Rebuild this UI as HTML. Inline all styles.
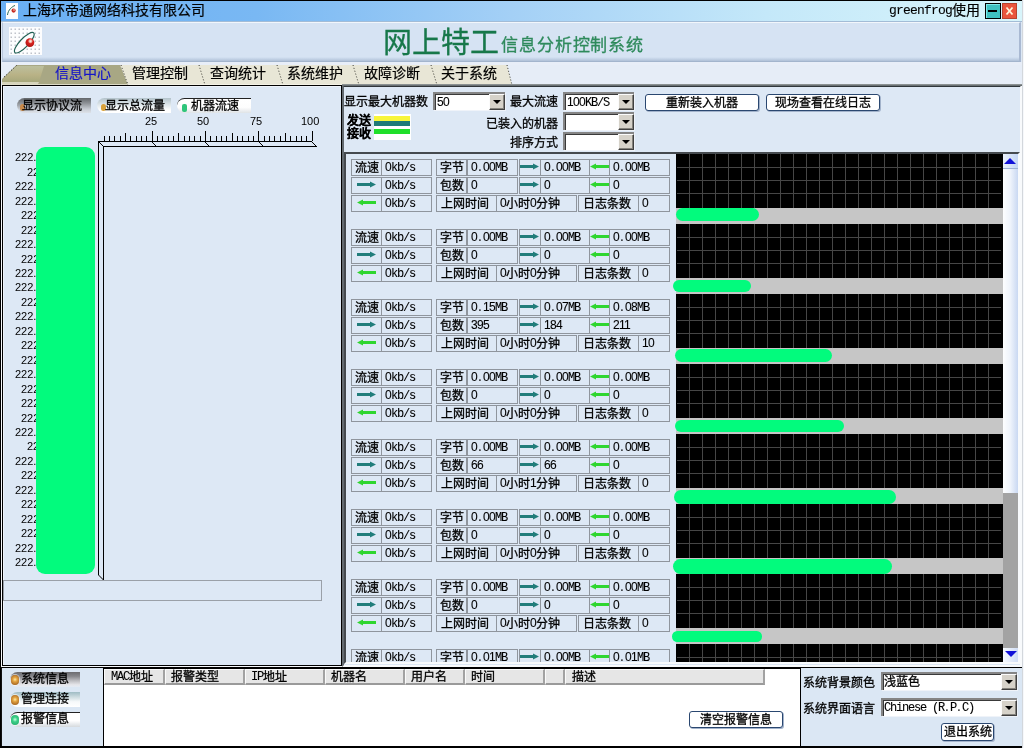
<!DOCTYPE html>
<html lang="zh-CN">
<head>
<meta charset="utf-8">
<title>网上特工信息分析控制系统</title>
<style>
*{box-sizing:border-box;margin:0;padding:0}
html,body{width:1024px;height:748px;overflow:hidden;background:#dde8f5}
#root{position:absolute;left:0;top:0;width:1024px;height:748px;overflow:hidden}
body{position:relative;font-family:"Liberation Sans",sans-serif;font-size:12px;line-height:12px;color:#000}
.a{position:absolute}
.t{position:absolute;white-space:nowrap;font-size:12px;line-height:12px;will-change:transform;-webkit-text-stroke:0.3px}
.bt{display:block;will-change:transform;-webkit-text-stroke:0.3px}
.m{font-family:"Liberation Mono",monospace;letter-spacing:-1.2px;position:relative;top:-1px;-webkit-text-stroke:0.1px}
.d{font-family:"Liberation Sans",sans-serif;letter-spacing:-0.67px;position:relative;top:-1px;-webkit-text-stroke:0.1px}
.d i{font-style:normal;display:inline-block;width:6px;text-align:center;letter-spacing:0}
.s{font-family:"Liberation Sans",sans-serif;-webkit-text-stroke:0}
/* window */
#topline{left:0;top:0;width:1022px;height:1px;background:#000}
#leftline{left:0;top:0;width:1px;height:748px;background:#000}
#botline{left:0;top:746px;width:1022px;height:2px;background:#000}
#rightedge{left:1022px;top:0;width:2px;height:748px;background:#f6f8fb;border-left:1px solid #d3d7dc}
#titlebar{left:1px;top:1px;width:1021px;height:20px;background:linear-gradient(90deg,#6aaff3 0%,#79b8f3 25%,#a4d0f6 50%,#c4e8f9 75%,#d9f5fb 100%)}
#titleline{left:1px;top:21px;width:1021px;height:1px;background:#a3bcd6}
#hdr{left:2px;top:22px;width:1019px;height:40px;background:linear-gradient(180deg,#d6e3f3 0,#d6e3f3 34px,#c3d2e6 36px,#a6b8d0 39px);border:1px solid;border-color:#f2f6fb #a9b9d2 #a3b5cd #b9c6da;border-right-width:2px}
#gap{left:1px;top:62px;width:1021px;height:3px;background:#e8eef8}
/* tabs */
#tabbar{left:1px;top:65px;width:1021px;height:20px;background:#e6edf7}
.tab{-webkit-text-stroke:0.2px;will-change:transform;position:absolute;top:-2px;height:20px;font-size:14px;line-height:20px;white-space:nowrap}
/* panels */
.cell{position:absolute;height:17px;border:1px solid #8f959d;background:#dde8f5}
.combo{position:absolute;height:18px;background:#fff;border:2px solid;border-color:#858585 transparent transparent #858585;border-right-width:0;border-bottom-width:0;box-shadow:inset 1px 1px 0 #3a3a3a,1px 1px 0 #eff3f9}
.cbtn{position:absolute;right:0;top:0;width:16px;height:16px;background:#d6d2c9;border:1px solid;border-color:#fbfbfb #404040 #404040 #fbfbfb;box-shadow:inset -1px -1px 0 #85837d}
.cbtn:after{content:"";position:absolute;left:3px;top:5px;border:4px solid transparent;border-top:4px solid #000;border-bottom:0}
.btn{position:absolute;background:#fff;border:1px solid #2a4770;border-radius:3px;box-shadow:1px 1px 0 #a3b3cb;text-align:center;font-size:12px;line-height:17px}
</style>
</head>
<body>
<div id="root">
<div class="a" id="titlebar"></div><div class="a" id="titleline"></div>
<div class="a" id="hdr"></div><div class="a" id="gap"></div>
<svg class="a" style="left:6px;top:3px" width="12" height="16" viewBox="0 0 12 16"><rect width="12" height="16" fill="#fdfdfd"/><path d="M1.5 12 C2 7 6 3.5 9 2.5" stroke="#2a6a55" stroke-width="1" fill="none"/><circle cx="7.6" cy="7.6" r="2.1" fill="#c62a22"/><circle cx="8" cy="7" r="0.8" fill="#f1d0c8"/></svg>
<div class="t" style="left:23px;top:3px;font-size:14px;line-height:14px;-webkit-text-stroke:0.2px">上海环帝通网络科技有限公司</div>
<div class="t" style="left:889px;top:3px;font-size:14px;line-height:14px;-webkit-text-stroke:0.2px"><span class="m" style="font-size:13px;letter-spacing:-0.8px">greenfrog</span>使用</div>
<div class="a" style="left:985px;top:3px;width:16px;height:16px;background:#3fc1c1;border:1px solid #000;box-shadow:inset 1px 1px 0 #7fe9e9"><div class="a" style="left:2px;top:6px;width:9px;height:2px;background:#000"></div></div>
<svg class="a" style="left:1002px;top:3px" width="15" height="16" viewBox="0 0 15 16"><rect width="15" height="16" fill="#e9553d"/><rect x="0.5" y="0.5" width="14" height="15" fill="none" stroke="#b8432f"/><path d="M4.5 4.5 L10.5 11.5 M10.5 4.5 L4.5 11.5" stroke="#fff6dc" stroke-width="1.8"/></svg>
<svg class="a" style="left:9px;top:27px" width="33" height="28" viewBox="0 0 33 28"><defs><pattern id="dots" width="4" height="4" patternUnits="userSpaceOnUse"><rect width="4" height="4" fill="#fdfdfe"/><rect x="1.5" y="1.5" width="1.5" height="1.5" fill="#c0c3cb"/></pattern><radialGradient id="ball" cx="0.56" cy="0.34" r="0.7"><stop offset="0" stop-color="#fff4ee"/><stop offset="0.22" stop-color="#f0b0a4"/><stop offset="0.4" stop-color="#d8221f"/><stop offset="1" stop-color="#a81414"/></radialGradient></defs><rect width="33" height="28" fill="url(#dots)"/><ellipse cx="15.3" cy="15.7" rx="13.6" ry="4.3" transform="rotate(-46.5 15.3 15.7)" fill="#fdfdfe" stroke="#1f5f52" stroke-width="1.15"/><circle cx="20.9" cy="15.6" r="4.4" fill="url(#ball)"/></svg>
<div class="t" style="left:383px;top:28px;font-size:29px;line-height:30px;color:#17784a">网上特工</div>
<div class="t" style="left:501px;top:37px;font-size:17px;line-height:18px;color:#2f8a5c;letter-spacing:0.9px">信息分析控制系统</div>
<div class="a" id="tabbar">
<svg class="a" style="left:0;top:0" width="1021" height="20" viewBox="0 0 1021 20"><defs><linearGradient id="tg" x1="0" y1="0" x2="0" y2="1"><stop offset="0" stop-color="#bcbf9e"/><stop offset="0.55" stop-color="#b9b286"/><stop offset="1" stop-color="#a6a77b"/></linearGradient></defs><polygon points="127,20 119,0 506,0 511,20" fill="#e8e6d6"/><rect x="127" y="19" width="384" height="1" fill="#f4f2e6"/><polygon points="1,20 1,14 15.5,0 119,0 127,20" fill="#a8a784"/><polygon points="2,17 3,13 15.5,1 43,1 38,17" fill="url(#tg)"/><polygon points="1,19 1,17 38,17 37,19" fill="#d6d4bc"/><rect x="1" y="19" width="126" height="1" fill="#dcdac6"/><path d="M15.5 0.5 L1.5 13.5" stroke="#1a1a1a" stroke-width="1" stroke-dasharray="1 2.2" fill="none"/><g stroke="#3a3a34" stroke-width="1" stroke-dasharray="1 2" fill="none"><path d="M120 0 L127 20"/><path d="M198 0 L204 20"/><path d="M276 0 L282 20"/><path d="M352 0 L358 20"/><path d="M430 0 L436 20"/><path d="M506 0 L511 20"/></g></svg>
<div class="tab" style="left:54px;color:#1515c8">信息中心</div>
<div class="tab" style="left:131px;color:#000">管理控制</div>
<div class="tab" style="left:209px;color:#000">查询统计</div>
<div class="tab" style="left:286px;color:#000">系统维护</div>
<div class="tab" style="left:363px;color:#000">故障诊断</div>
<div class="tab" style="left:439.5px;color:#000">关于系统</div>
</div>
<div class="a" style="left:1px;top:85px;width:1px;height:582px;background:#f6f8fb"></div><div class="a" style="left:1px;top:666px;width:341px;height:1px;background:#f6f8fb"></div>
<div class="a" id="lp" style="left:2px;top:85px;width:340px;height:581px;background:#dde8f5;border:1px solid #000;box-shadow:inset 1px 1px 0 #eef3fa"></div>
<div class="a" style="left:17px;top:98px;width:74px;height:15px;border-radius:8px 0 0 8px;background:linear-gradient(180deg,#63676b 0%,#8e9297 35%,#c9ced5 75%,#dde2e9 100%)"></div>
<div class="a" style="left:20px;top:104px;width:5px;height:7px;border-radius:3px;background:#c98a4a"></div>
<div class="t" style="left:22px;top:100px">显示协议流</div>
<div class="a" style="left:97px;top:98px;width:74px;height:15px;border-radius:8px 0 0 8px;background:linear-gradient(180deg,#b3c3cb 0%,#dfe7eb 45%,#ffffff 80%)"></div>
<div class="a" style="left:101px;top:104px;width:5px;height:7px;border-radius:3px;background:#d9a13a"></div>
<div class="t" style="left:105px;top:100px">显示总流量</div>
<div class="a" style="left:177px;top:98px;width:74px;height:15px;border-radius:8px 0 0 8px;border-top:1px solid #222;background:linear-gradient(180deg,#ffffff 0%,#fdfdfd 60%,#dfe3e6 100%)"></div>
<div class="a" style="left:182px;top:104px;width:5px;height:8px;border-radius:2px;background:#2ec57a"></div>
<div class="t" style="left:191px;top:100px">机器流速</div>
<div class="t s" style="left:145px;top:115px;font-size:11px;line-height:12px">25</div>
<div class="t s" style="left:197px;top:115px;font-size:11px;line-height:12px">50</div>
<div class="t s" style="left:250px;top:115px;font-size:11px;line-height:12px">75</div>
<div class="t s" style="left:301px;top:115px;font-size:11px;line-height:12px">100</div>
<svg class="a" style="left:0;top:0" width="345" height="600" viewBox="0 0 345 600" shape-rendering="crispEdges"><g stroke="#000" stroke-width="1" fill="none"><path d="M104.5 141 V136 M109.5 141 V136 M114.5 141 V136 M120.5 141 V136 M125.5 141 V133 M130.5 141 V136 M136.5 141 V136 M141.5 141 V136 M146.5 141 V136 M152.5 141 V131 M157.5 141 V136 M162.5 141 V136 M168.5 141 V136 M173.5 141 V136 M178.5 141 V133 M184.5 141 V136 M189.5 141 V136 M194.5 141 V136 M200.5 141 V136 M205.5 141 V131 M210.5 141 V136 M216.5 141 V136 M221.5 141 V136 M226.5 141 V136 M232.5 141 V133 M237.5 141 V136 M242.5 141 V136 M248.5 141 V136 M253.5 141 V136 M258.5 141 V131 M264.5 141 V136 M269.5 141 V136 M274.5 141 V136 M280.5 141 V136 M285.5 141 V133 M290.5 141 V136 M296.5 141 V136 M301.5 141 V136 M306.5 141 V136 M312.5 141 V131 "/><path d="M98 141.5 H312 M103 146.5 H317 M98.5 141 V575 M103.5 146 V580"/></g><g stroke="#000" stroke-width="1" fill="none" shape-rendering="auto"><path d="M98.5 141.5 L103.5 146.5 M151.5 141.5 L156.5 146.5 M204.5 141.5 L209.5 146.5 M258.5 141.5 L263.5 146.5 M311.5 141.5 L316.5 146.5 M98.5 575 L103.5 580"/></g></svg>
<div class="t s" style="left:15px;top:151px;font-size:11px;line-height:12px">222.</div>
<div class="t s" style="left:27px;top:166px;font-size:11px;line-height:12px">222.</div>
<div class="t s" style="left:15px;top:180px;font-size:11px;line-height:12px">222.</div>
<div class="t s" style="left:15px;top:195px;font-size:11px;line-height:12px">222.</div>
<div class="t s" style="left:21px;top:209px;font-size:11px;line-height:12px">222.</div>
<div class="t s" style="left:21px;top:224px;font-size:11px;line-height:12px">222.</div>
<div class="t s" style="left:15px;top:238px;font-size:11px;line-height:12px">222.</div>
<div class="t s" style="left:21px;top:253px;font-size:11px;line-height:12px">222.</div>
<div class="t s" style="left:15px;top:267px;font-size:11px;line-height:12px">222.</div>
<div class="t s" style="left:15px;top:281px;font-size:11px;line-height:12px">222.</div>
<div class="t s" style="left:21px;top:296px;font-size:11px;line-height:12px">222.</div>
<div class="t s" style="left:15px;top:310px;font-size:11px;line-height:12px">222.</div>
<div class="t s" style="left:15px;top:325px;font-size:11px;line-height:12px">222.</div>
<div class="t s" style="left:21px;top:339px;font-size:11px;line-height:12px">222.</div>
<div class="t s" style="left:21px;top:354px;font-size:11px;line-height:12px">222.</div>
<div class="t s" style="left:15px;top:368px;font-size:11px;line-height:12px">222.</div>
<div class="t s" style="left:21px;top:383px;font-size:11px;line-height:12px">222.</div>
<div class="t s" style="left:21px;top:397px;font-size:11px;line-height:12px">222.</div>
<div class="t s" style="left:21px;top:412px;font-size:11px;line-height:12px">222.</div>
<div class="t s" style="left:15px;top:426px;font-size:11px;line-height:12px">222.</div>
<div class="t s" style="left:27px;top:440px;font-size:11px;line-height:12px">222.</div>
<div class="t s" style="left:15px;top:455px;font-size:11px;line-height:12px">222.</div>
<div class="t s" style="left:21px;top:469px;font-size:11px;line-height:12px">222.</div>
<div class="t s" style="left:15px;top:484px;font-size:11px;line-height:12px">222.</div>
<div class="t s" style="left:21px;top:498px;font-size:11px;line-height:12px">222.</div>
<div class="t s" style="left:21px;top:513px;font-size:11px;line-height:12px">222.</div>
<div class="t s" style="left:21px;top:527px;font-size:11px;line-height:12px">222.</div>
<div class="t s" style="left:15px;top:542px;font-size:11px;line-height:12px">222.</div>
<div class="t s" style="left:15px;top:556px;font-size:11px;line-height:12px">222.</div>
<div class="a" style="left:36px;top:147px;width:59px;height:427px;border-radius:9px;background:#02fb7d"></div>
<div class="a" style="left:3px;top:580px;width:319px;height:21px;border:1px solid #9aa0a8;background:#dde8f5"></div>
<div class="a" id="rp" style="left:342px;top:84px;width:680px;height:583px;background:#dde8f5;border-left:2px solid #636a70;border-top:3px solid #30363a;border-right:2px solid #f8fafc;border-bottom:2px solid #f8fafc"><div class="a" style="left:-2px;top:-3px;width:680px;height:1px;background:#8b9192"></div><div class="a" style="left:-2px;top:-2px;width:680px;height:1px;background:#697073"></div></div>
<div class="t" style="left:344px;top:96px">显示最大机器数</div>
<div class="combo" style="left:433px;top:92px;width:72px"><div class="cbtn"></div><div class="t" style="left:2px;top:3px"><span class="d">50</span></div></div>
<div class="t" style="left:510px;top:96px">最大流速</div>
<div class="combo" style="left:563px;top:92px;width:71px"><div class="cbtn"></div><div class="t" style="left:2px;top:3px"><span class="d">100</span><span class="m">KB/S</span></div></div>
<div class="t" style="left:486px;top:118px">已装入的机器</div>
<div class="combo" style="left:563px;top:112px;width:71px"><div class="cbtn"></div></div>
<div class="t" style="left:510px;top:137px">排序方式</div>
<div class="combo" style="left:563px;top:132px;width:71px"><div class="cbtn"></div></div>
<div class="btn" style="left:645px;top:94px;width:114px;height:17px"><span class="bt">重新装入机器</span></div>
<div class="btn" style="left:766px;top:94px;width:114px;height:17px"><span class="bt">现场查看在线日志</span></div>
<div class="t" style="left:347px;top:115px;font-weight:bold;-webkit-text-stroke:0.2px">发送</div>
<div class="t" style="left:347px;top:128px;font-weight:bold;-webkit-text-stroke:0.2px">接收</div>
<div class="a" style="left:374px;top:114px;width:37px;height:26px;background:#fff"><div class="a" style="left:0;top:2px;width:36px;height:5px;background:#f8f53a"></div><div class="a" style="left:0;top:7px;width:36px;height:5px;background:#1f7a78"></div><div class="a" style="left:0;top:15px;width:36px;height:5px;background:#1fdf2a"></div></div>
<div class="a" id="sa" style="left:344px;top:152px;width:676px;height:512px;overflow:hidden;border:2px solid #454a4f;border-right:2px solid #f8fafc;border-bottom:2px solid #f8fafc;background:#dde8f5">
<div class="cell" style="left:5px;top:5px;width:31px;height:17px"><div class="t" style="left:3px;top:2px">流速</div></div>
<div class="cell" style="left:35px;top:5px;width:51px;height:17px"><div class="t" style="left:3px;top:2px"><span class="d">0</span><span class="m">kb/s</span></div></div>
<div class="cell" style="left:90px;top:5px;width:31px;height:17px"><div class="t" style="left:3px;top:2px">字节</div></div>
<div class="cell" style="left:121px;top:5px;width:51px;height:17px"><div class="t" style="left:3px;top:2px"><span class="d">0<i>.</i>00</span><span class="m">MB</span></div></div>
<div class="cell" style="left:173px;top:5px;width:22px;height:17px"></div>
<svg class="a" style="left:174px;top:9px" width="20" height="7" viewBox="0 0 20 7"><path d="M0 2 H13 V0.5 L19 3.5 L13 6.5 V5 H0 Z" fill="#217d7b"/></svg>
<div class="cell" style="left:194px;top:5px;width:50px;height:17px"><div class="t" style="left:3px;top:2px"><span class="d">0<i>.</i>00</span><span class="m">MB</span></div></div>
<div class="cell" style="left:243px;top:5px;width:21px;height:17px"></div>
<svg class="a" style="left:244px;top:9px" width="20" height="7" viewBox="0 0 20 7"><path d="M19 2 H6 V0.5 L0 3.5 L6 6.5 V5 H19 Z" fill="#2fd62f"/></svg>
<div class="cell" style="left:263px;top:5px;width:61px;height:17px"><div class="t" style="left:3px;top:2px"><span class="d">0<i>.</i>00</span><span class="m">MB</span></div></div>
<div class="cell" style="left:5px;top:23px;width:31px;height:17px"></div>
<svg class="a" style="left:11px;top:27px" width="20" height="7" viewBox="0 0 20 7"><path d="M0 2 H13 V0.5 L19 3.5 L13 6.5 V5 H0 Z" fill="#217d7b"/></svg>
<div class="cell" style="left:35px;top:23px;width:51px;height:17px"><div class="t" style="left:3px;top:2px"><span class="d">0</span><span class="m">kb/s</span></div></div>
<div class="cell" style="left:90px;top:23px;width:31px;height:17px"><div class="t" style="left:3px;top:2px">包数</div></div>
<div class="cell" style="left:121px;top:23px;width:51px;height:17px"><div class="t" style="left:3px;top:2px"><span class="d">0</span></div></div>
<div class="cell" style="left:173px;top:23px;width:22px;height:17px"></div>
<svg class="a" style="left:174px;top:27px" width="20" height="7" viewBox="0 0 20 7"><path d="M0 2 H13 V0.5 L19 3.5 L13 6.5 V5 H0 Z" fill="#217d7b"/></svg>
<div class="cell" style="left:194px;top:23px;width:50px;height:17px"><div class="t" style="left:3px;top:2px"><span class="d">0</span></div></div>
<div class="cell" style="left:243px;top:23px;width:21px;height:17px"></div>
<svg class="a" style="left:244px;top:27px" width="20" height="7" viewBox="0 0 20 7"><path d="M19 2 H6 V0.5 L0 3.5 L6 6.5 V5 H19 Z" fill="#2fd62f"/></svg>
<div class="cell" style="left:263px;top:23px;width:61px;height:17px"><div class="t" style="left:3px;top:2px"><span class="d">0</span></div></div>
<div class="cell" style="left:5px;top:41px;width:31px;height:17px"></div>
<svg class="a" style="left:11px;top:45px" width="20" height="7" viewBox="0 0 20 7"><path d="M19 2 H6 V0.5 L0 3.5 L6 6.5 V5 H19 Z" fill="#2fd62f"/></svg>
<div class="cell" style="left:35px;top:41px;width:51px;height:17px"><div class="t" style="left:3px;top:2px"><span class="d">0</span><span class="m">kb/s</span></div></div>
<div class="cell" style="left:90px;top:41px;width:61px;height:17px"><div class="t" style="left:4px;top:2px">上网时间</div></div>
<div class="cell" style="left:150px;top:41px;width:81px;height:17px"><div class="t" style="left:3px;top:2px"><span class="d">0</span>小时<span class="d">0</span>分钟</div></div>
<div class="cell" style="left:232px;top:41px;width:61px;height:17px"><div class="t" style="left:4px;top:2px">日志条数</div></div>
<div class="cell" style="left:292px;top:41px;width:32px;height:17px"><div class="t" style="left:3px;top:2px"><span class="d">0</span></div></div>
<div class="cell" style="left:5px;top:75px;width:31px;height:17px"><div class="t" style="left:3px;top:2px">流速</div></div>
<div class="cell" style="left:35px;top:75px;width:51px;height:17px"><div class="t" style="left:3px;top:2px"><span class="d">0</span><span class="m">kb/s</span></div></div>
<div class="cell" style="left:90px;top:75px;width:31px;height:17px"><div class="t" style="left:3px;top:2px">字节</div></div>
<div class="cell" style="left:121px;top:75px;width:51px;height:17px"><div class="t" style="left:3px;top:2px"><span class="d">0<i>.</i>00</span><span class="m">MB</span></div></div>
<div class="cell" style="left:173px;top:75px;width:22px;height:17px"></div>
<svg class="a" style="left:174px;top:79px" width="20" height="7" viewBox="0 0 20 7"><path d="M0 2 H13 V0.5 L19 3.5 L13 6.5 V5 H0 Z" fill="#217d7b"/></svg>
<div class="cell" style="left:194px;top:75px;width:50px;height:17px"><div class="t" style="left:3px;top:2px"><span class="d">0<i>.</i>00</span><span class="m">MB</span></div></div>
<div class="cell" style="left:243px;top:75px;width:21px;height:17px"></div>
<svg class="a" style="left:244px;top:79px" width="20" height="7" viewBox="0 0 20 7"><path d="M19 2 H6 V0.5 L0 3.5 L6 6.5 V5 H19 Z" fill="#2fd62f"/></svg>
<div class="cell" style="left:263px;top:75px;width:61px;height:17px"><div class="t" style="left:3px;top:2px"><span class="d">0<i>.</i>00</span><span class="m">MB</span></div></div>
<div class="cell" style="left:5px;top:93px;width:31px;height:17px"></div>
<svg class="a" style="left:11px;top:97px" width="20" height="7" viewBox="0 0 20 7"><path d="M0 2 H13 V0.5 L19 3.5 L13 6.5 V5 H0 Z" fill="#217d7b"/></svg>
<div class="cell" style="left:35px;top:93px;width:51px;height:17px"><div class="t" style="left:3px;top:2px"><span class="d">0</span><span class="m">kb/s</span></div></div>
<div class="cell" style="left:90px;top:93px;width:31px;height:17px"><div class="t" style="left:3px;top:2px">包数</div></div>
<div class="cell" style="left:121px;top:93px;width:51px;height:17px"><div class="t" style="left:3px;top:2px"><span class="d">0</span></div></div>
<div class="cell" style="left:173px;top:93px;width:22px;height:17px"></div>
<svg class="a" style="left:174px;top:97px" width="20" height="7" viewBox="0 0 20 7"><path d="M0 2 H13 V0.5 L19 3.5 L13 6.5 V5 H0 Z" fill="#217d7b"/></svg>
<div class="cell" style="left:194px;top:93px;width:50px;height:17px"><div class="t" style="left:3px;top:2px"><span class="d">0</span></div></div>
<div class="cell" style="left:243px;top:93px;width:21px;height:17px"></div>
<svg class="a" style="left:244px;top:97px" width="20" height="7" viewBox="0 0 20 7"><path d="M19 2 H6 V0.5 L0 3.5 L6 6.5 V5 H19 Z" fill="#2fd62f"/></svg>
<div class="cell" style="left:263px;top:93px;width:61px;height:17px"><div class="t" style="left:3px;top:2px"><span class="d">0</span></div></div>
<div class="cell" style="left:5px;top:111px;width:31px;height:17px"></div>
<svg class="a" style="left:11px;top:115px" width="20" height="7" viewBox="0 0 20 7"><path d="M19 2 H6 V0.5 L0 3.5 L6 6.5 V5 H19 Z" fill="#2fd62f"/></svg>
<div class="cell" style="left:35px;top:111px;width:51px;height:17px"><div class="t" style="left:3px;top:2px"><span class="d">0</span><span class="m">kb/s</span></div></div>
<div class="cell" style="left:90px;top:111px;width:61px;height:17px"><div class="t" style="left:4px;top:2px">上网时间</div></div>
<div class="cell" style="left:150px;top:111px;width:81px;height:17px"><div class="t" style="left:3px;top:2px"><span class="d">0</span>小时<span class="d">0</span>分钟</div></div>
<div class="cell" style="left:232px;top:111px;width:61px;height:17px"><div class="t" style="left:4px;top:2px">日志条数</div></div>
<div class="cell" style="left:292px;top:111px;width:32px;height:17px"><div class="t" style="left:3px;top:2px"><span class="d">0</span></div></div>
<div class="cell" style="left:5px;top:145px;width:31px;height:17px"><div class="t" style="left:3px;top:2px">流速</div></div>
<div class="cell" style="left:35px;top:145px;width:51px;height:17px"><div class="t" style="left:3px;top:2px"><span class="d">0</span><span class="m">kb/s</span></div></div>
<div class="cell" style="left:90px;top:145px;width:31px;height:17px"><div class="t" style="left:3px;top:2px">字节</div></div>
<div class="cell" style="left:121px;top:145px;width:51px;height:17px"><div class="t" style="left:3px;top:2px"><span class="d">0<i>.</i>15</span><span class="m">MB</span></div></div>
<div class="cell" style="left:173px;top:145px;width:22px;height:17px"></div>
<svg class="a" style="left:174px;top:149px" width="20" height="7" viewBox="0 0 20 7"><path d="M0 2 H13 V0.5 L19 3.5 L13 6.5 V5 H0 Z" fill="#217d7b"/></svg>
<div class="cell" style="left:194px;top:145px;width:50px;height:17px"><div class="t" style="left:3px;top:2px"><span class="d">0<i>.</i>07</span><span class="m">MB</span></div></div>
<div class="cell" style="left:243px;top:145px;width:21px;height:17px"></div>
<svg class="a" style="left:244px;top:149px" width="20" height="7" viewBox="0 0 20 7"><path d="M19 2 H6 V0.5 L0 3.5 L6 6.5 V5 H19 Z" fill="#2fd62f"/></svg>
<div class="cell" style="left:263px;top:145px;width:61px;height:17px"><div class="t" style="left:3px;top:2px"><span class="d">0<i>.</i>08</span><span class="m">MB</span></div></div>
<div class="cell" style="left:5px;top:163px;width:31px;height:17px"></div>
<svg class="a" style="left:11px;top:167px" width="20" height="7" viewBox="0 0 20 7"><path d="M0 2 H13 V0.5 L19 3.5 L13 6.5 V5 H0 Z" fill="#217d7b"/></svg>
<div class="cell" style="left:35px;top:163px;width:51px;height:17px"><div class="t" style="left:3px;top:2px"><span class="d">0</span><span class="m">kb/s</span></div></div>
<div class="cell" style="left:90px;top:163px;width:31px;height:17px"><div class="t" style="left:3px;top:2px">包数</div></div>
<div class="cell" style="left:121px;top:163px;width:51px;height:17px"><div class="t" style="left:3px;top:2px"><span class="d">395</span></div></div>
<div class="cell" style="left:173px;top:163px;width:22px;height:17px"></div>
<svg class="a" style="left:174px;top:167px" width="20" height="7" viewBox="0 0 20 7"><path d="M0 2 H13 V0.5 L19 3.5 L13 6.5 V5 H0 Z" fill="#217d7b"/></svg>
<div class="cell" style="left:194px;top:163px;width:50px;height:17px"><div class="t" style="left:3px;top:2px"><span class="d">184</span></div></div>
<div class="cell" style="left:243px;top:163px;width:21px;height:17px"></div>
<svg class="a" style="left:244px;top:167px" width="20" height="7" viewBox="0 0 20 7"><path d="M19 2 H6 V0.5 L0 3.5 L6 6.5 V5 H19 Z" fill="#2fd62f"/></svg>
<div class="cell" style="left:263px;top:163px;width:61px;height:17px"><div class="t" style="left:3px;top:2px"><span class="d">211</span></div></div>
<div class="cell" style="left:5px;top:181px;width:31px;height:17px"></div>
<svg class="a" style="left:11px;top:185px" width="20" height="7" viewBox="0 0 20 7"><path d="M19 2 H6 V0.5 L0 3.5 L6 6.5 V5 H19 Z" fill="#2fd62f"/></svg>
<div class="cell" style="left:35px;top:181px;width:51px;height:17px"><div class="t" style="left:3px;top:2px"><span class="d">0</span><span class="m">kb/s</span></div></div>
<div class="cell" style="left:90px;top:181px;width:61px;height:17px"><div class="t" style="left:4px;top:2px">上网时间</div></div>
<div class="cell" style="left:150px;top:181px;width:81px;height:17px"><div class="t" style="left:3px;top:2px"><span class="d">0</span>小时<span class="d">0</span>分钟</div></div>
<div class="cell" style="left:232px;top:181px;width:61px;height:17px"><div class="t" style="left:4px;top:2px">日志条数</div></div>
<div class="cell" style="left:292px;top:181px;width:32px;height:17px"><div class="t" style="left:3px;top:2px"><span class="d">10</span></div></div>
<div class="cell" style="left:5px;top:215px;width:31px;height:17px"><div class="t" style="left:3px;top:2px">流速</div></div>
<div class="cell" style="left:35px;top:215px;width:51px;height:17px"><div class="t" style="left:3px;top:2px"><span class="d">0</span><span class="m">kb/s</span></div></div>
<div class="cell" style="left:90px;top:215px;width:31px;height:17px"><div class="t" style="left:3px;top:2px">字节</div></div>
<div class="cell" style="left:121px;top:215px;width:51px;height:17px"><div class="t" style="left:3px;top:2px"><span class="d">0<i>.</i>00</span><span class="m">MB</span></div></div>
<div class="cell" style="left:173px;top:215px;width:22px;height:17px"></div>
<svg class="a" style="left:174px;top:219px" width="20" height="7" viewBox="0 0 20 7"><path d="M0 2 H13 V0.5 L19 3.5 L13 6.5 V5 H0 Z" fill="#217d7b"/></svg>
<div class="cell" style="left:194px;top:215px;width:50px;height:17px"><div class="t" style="left:3px;top:2px"><span class="d">0<i>.</i>00</span><span class="m">MB</span></div></div>
<div class="cell" style="left:243px;top:215px;width:21px;height:17px"></div>
<svg class="a" style="left:244px;top:219px" width="20" height="7" viewBox="0 0 20 7"><path d="M19 2 H6 V0.5 L0 3.5 L6 6.5 V5 H19 Z" fill="#2fd62f"/></svg>
<div class="cell" style="left:263px;top:215px;width:61px;height:17px"><div class="t" style="left:3px;top:2px"><span class="d">0<i>.</i>00</span><span class="m">MB</span></div></div>
<div class="cell" style="left:5px;top:233px;width:31px;height:17px"></div>
<svg class="a" style="left:11px;top:237px" width="20" height="7" viewBox="0 0 20 7"><path d="M0 2 H13 V0.5 L19 3.5 L13 6.5 V5 H0 Z" fill="#217d7b"/></svg>
<div class="cell" style="left:35px;top:233px;width:51px;height:17px"><div class="t" style="left:3px;top:2px"><span class="d">0</span><span class="m">kb/s</span></div></div>
<div class="cell" style="left:90px;top:233px;width:31px;height:17px"><div class="t" style="left:3px;top:2px">包数</div></div>
<div class="cell" style="left:121px;top:233px;width:51px;height:17px"><div class="t" style="left:3px;top:2px"><span class="d">0</span></div></div>
<div class="cell" style="left:173px;top:233px;width:22px;height:17px"></div>
<svg class="a" style="left:174px;top:237px" width="20" height="7" viewBox="0 0 20 7"><path d="M0 2 H13 V0.5 L19 3.5 L13 6.5 V5 H0 Z" fill="#217d7b"/></svg>
<div class="cell" style="left:194px;top:233px;width:50px;height:17px"><div class="t" style="left:3px;top:2px"><span class="d">0</span></div></div>
<div class="cell" style="left:243px;top:233px;width:21px;height:17px"></div>
<svg class="a" style="left:244px;top:237px" width="20" height="7" viewBox="0 0 20 7"><path d="M19 2 H6 V0.5 L0 3.5 L6 6.5 V5 H19 Z" fill="#2fd62f"/></svg>
<div class="cell" style="left:263px;top:233px;width:61px;height:17px"><div class="t" style="left:3px;top:2px"><span class="d">0</span></div></div>
<div class="cell" style="left:5px;top:251px;width:31px;height:17px"></div>
<svg class="a" style="left:11px;top:255px" width="20" height="7" viewBox="0 0 20 7"><path d="M19 2 H6 V0.5 L0 3.5 L6 6.5 V5 H19 Z" fill="#2fd62f"/></svg>
<div class="cell" style="left:35px;top:251px;width:51px;height:17px"><div class="t" style="left:3px;top:2px"><span class="d">0</span><span class="m">kb/s</span></div></div>
<div class="cell" style="left:90px;top:251px;width:61px;height:17px"><div class="t" style="left:4px;top:2px">上网时间</div></div>
<div class="cell" style="left:150px;top:251px;width:81px;height:17px"><div class="t" style="left:3px;top:2px"><span class="d">0</span>小时<span class="d">0</span>分钟</div></div>
<div class="cell" style="left:232px;top:251px;width:61px;height:17px"><div class="t" style="left:4px;top:2px">日志条数</div></div>
<div class="cell" style="left:292px;top:251px;width:32px;height:17px"><div class="t" style="left:3px;top:2px"><span class="d">0</span></div></div>
<div class="cell" style="left:5px;top:285px;width:31px;height:17px"><div class="t" style="left:3px;top:2px">流速</div></div>
<div class="cell" style="left:35px;top:285px;width:51px;height:17px"><div class="t" style="left:3px;top:2px"><span class="d">0</span><span class="m">kb/s</span></div></div>
<div class="cell" style="left:90px;top:285px;width:31px;height:17px"><div class="t" style="left:3px;top:2px">字节</div></div>
<div class="cell" style="left:121px;top:285px;width:51px;height:17px"><div class="t" style="left:3px;top:2px"><span class="d">0<i>.</i>00</span><span class="m">MB</span></div></div>
<div class="cell" style="left:173px;top:285px;width:22px;height:17px"></div>
<svg class="a" style="left:174px;top:289px" width="20" height="7" viewBox="0 0 20 7"><path d="M0 2 H13 V0.5 L19 3.5 L13 6.5 V5 H0 Z" fill="#217d7b"/></svg>
<div class="cell" style="left:194px;top:285px;width:50px;height:17px"><div class="t" style="left:3px;top:2px"><span class="d">0<i>.</i>00</span><span class="m">MB</span></div></div>
<div class="cell" style="left:243px;top:285px;width:21px;height:17px"></div>
<svg class="a" style="left:244px;top:289px" width="20" height="7" viewBox="0 0 20 7"><path d="M19 2 H6 V0.5 L0 3.5 L6 6.5 V5 H19 Z" fill="#2fd62f"/></svg>
<div class="cell" style="left:263px;top:285px;width:61px;height:17px"><div class="t" style="left:3px;top:2px"><span class="d">0<i>.</i>00</span><span class="m">MB</span></div></div>
<div class="cell" style="left:5px;top:303px;width:31px;height:17px"></div>
<svg class="a" style="left:11px;top:307px" width="20" height="7" viewBox="0 0 20 7"><path d="M0 2 H13 V0.5 L19 3.5 L13 6.5 V5 H0 Z" fill="#217d7b"/></svg>
<div class="cell" style="left:35px;top:303px;width:51px;height:17px"><div class="t" style="left:3px;top:2px"><span class="d">0</span><span class="m">kb/s</span></div></div>
<div class="cell" style="left:90px;top:303px;width:31px;height:17px"><div class="t" style="left:3px;top:2px">包数</div></div>
<div class="cell" style="left:121px;top:303px;width:51px;height:17px"><div class="t" style="left:3px;top:2px"><span class="d">66</span></div></div>
<div class="cell" style="left:173px;top:303px;width:22px;height:17px"></div>
<svg class="a" style="left:174px;top:307px" width="20" height="7" viewBox="0 0 20 7"><path d="M0 2 H13 V0.5 L19 3.5 L13 6.5 V5 H0 Z" fill="#217d7b"/></svg>
<div class="cell" style="left:194px;top:303px;width:50px;height:17px"><div class="t" style="left:3px;top:2px"><span class="d">66</span></div></div>
<div class="cell" style="left:243px;top:303px;width:21px;height:17px"></div>
<svg class="a" style="left:244px;top:307px" width="20" height="7" viewBox="0 0 20 7"><path d="M19 2 H6 V0.5 L0 3.5 L6 6.5 V5 H19 Z" fill="#2fd62f"/></svg>
<div class="cell" style="left:263px;top:303px;width:61px;height:17px"><div class="t" style="left:3px;top:2px"><span class="d">0</span></div></div>
<div class="cell" style="left:5px;top:321px;width:31px;height:17px"></div>
<svg class="a" style="left:11px;top:325px" width="20" height="7" viewBox="0 0 20 7"><path d="M19 2 H6 V0.5 L0 3.5 L6 6.5 V5 H19 Z" fill="#2fd62f"/></svg>
<div class="cell" style="left:35px;top:321px;width:51px;height:17px"><div class="t" style="left:3px;top:2px"><span class="d">0</span><span class="m">kb/s</span></div></div>
<div class="cell" style="left:90px;top:321px;width:61px;height:17px"><div class="t" style="left:4px;top:2px">上网时间</div></div>
<div class="cell" style="left:150px;top:321px;width:81px;height:17px"><div class="t" style="left:3px;top:2px"><span class="d">0</span>小时<span class="d">1</span>分钟</div></div>
<div class="cell" style="left:232px;top:321px;width:61px;height:17px"><div class="t" style="left:4px;top:2px">日志条数</div></div>
<div class="cell" style="left:292px;top:321px;width:32px;height:17px"><div class="t" style="left:3px;top:2px"><span class="d">0</span></div></div>
<div class="cell" style="left:5px;top:355px;width:31px;height:17px"><div class="t" style="left:3px;top:2px">流速</div></div>
<div class="cell" style="left:35px;top:355px;width:51px;height:17px"><div class="t" style="left:3px;top:2px"><span class="d">0</span><span class="m">kb/s</span></div></div>
<div class="cell" style="left:90px;top:355px;width:31px;height:17px"><div class="t" style="left:3px;top:2px">字节</div></div>
<div class="cell" style="left:121px;top:355px;width:51px;height:17px"><div class="t" style="left:3px;top:2px"><span class="d">0<i>.</i>00</span><span class="m">MB</span></div></div>
<div class="cell" style="left:173px;top:355px;width:22px;height:17px"></div>
<svg class="a" style="left:174px;top:359px" width="20" height="7" viewBox="0 0 20 7"><path d="M0 2 H13 V0.5 L19 3.5 L13 6.5 V5 H0 Z" fill="#217d7b"/></svg>
<div class="cell" style="left:194px;top:355px;width:50px;height:17px"><div class="t" style="left:3px;top:2px"><span class="d">0<i>.</i>00</span><span class="m">MB</span></div></div>
<div class="cell" style="left:243px;top:355px;width:21px;height:17px"></div>
<svg class="a" style="left:244px;top:359px" width="20" height="7" viewBox="0 0 20 7"><path d="M19 2 H6 V0.5 L0 3.5 L6 6.5 V5 H19 Z" fill="#2fd62f"/></svg>
<div class="cell" style="left:263px;top:355px;width:61px;height:17px"><div class="t" style="left:3px;top:2px"><span class="d">0<i>.</i>00</span><span class="m">MB</span></div></div>
<div class="cell" style="left:5px;top:373px;width:31px;height:17px"></div>
<svg class="a" style="left:11px;top:377px" width="20" height="7" viewBox="0 0 20 7"><path d="M0 2 H13 V0.5 L19 3.5 L13 6.5 V5 H0 Z" fill="#217d7b"/></svg>
<div class="cell" style="left:35px;top:373px;width:51px;height:17px"><div class="t" style="left:3px;top:2px"><span class="d">0</span><span class="m">kb/s</span></div></div>
<div class="cell" style="left:90px;top:373px;width:31px;height:17px"><div class="t" style="left:3px;top:2px">包数</div></div>
<div class="cell" style="left:121px;top:373px;width:51px;height:17px"><div class="t" style="left:3px;top:2px"><span class="d">0</span></div></div>
<div class="cell" style="left:173px;top:373px;width:22px;height:17px"></div>
<svg class="a" style="left:174px;top:377px" width="20" height="7" viewBox="0 0 20 7"><path d="M0 2 H13 V0.5 L19 3.5 L13 6.5 V5 H0 Z" fill="#217d7b"/></svg>
<div class="cell" style="left:194px;top:373px;width:50px;height:17px"><div class="t" style="left:3px;top:2px"><span class="d">0</span></div></div>
<div class="cell" style="left:243px;top:373px;width:21px;height:17px"></div>
<svg class="a" style="left:244px;top:377px" width="20" height="7" viewBox="0 0 20 7"><path d="M19 2 H6 V0.5 L0 3.5 L6 6.5 V5 H19 Z" fill="#2fd62f"/></svg>
<div class="cell" style="left:263px;top:373px;width:61px;height:17px"><div class="t" style="left:3px;top:2px"><span class="d">0</span></div></div>
<div class="cell" style="left:5px;top:391px;width:31px;height:17px"></div>
<svg class="a" style="left:11px;top:395px" width="20" height="7" viewBox="0 0 20 7"><path d="M19 2 H6 V0.5 L0 3.5 L6 6.5 V5 H19 Z" fill="#2fd62f"/></svg>
<div class="cell" style="left:35px;top:391px;width:51px;height:17px"><div class="t" style="left:3px;top:2px"><span class="d">0</span><span class="m">kb/s</span></div></div>
<div class="cell" style="left:90px;top:391px;width:61px;height:17px"><div class="t" style="left:4px;top:2px">上网时间</div></div>
<div class="cell" style="left:150px;top:391px;width:81px;height:17px"><div class="t" style="left:3px;top:2px"><span class="d">0</span>小时<span class="d">0</span>分钟</div></div>
<div class="cell" style="left:232px;top:391px;width:61px;height:17px"><div class="t" style="left:4px;top:2px">日志条数</div></div>
<div class="cell" style="left:292px;top:391px;width:32px;height:17px"><div class="t" style="left:3px;top:2px"><span class="d">0</span></div></div>
<div class="cell" style="left:5px;top:425px;width:31px;height:17px"><div class="t" style="left:3px;top:2px">流速</div></div>
<div class="cell" style="left:35px;top:425px;width:51px;height:17px"><div class="t" style="left:3px;top:2px"><span class="d">0</span><span class="m">kb/s</span></div></div>
<div class="cell" style="left:90px;top:425px;width:31px;height:17px"><div class="t" style="left:3px;top:2px">字节</div></div>
<div class="cell" style="left:121px;top:425px;width:51px;height:17px"><div class="t" style="left:3px;top:2px"><span class="d">0<i>.</i>00</span><span class="m">MB</span></div></div>
<div class="cell" style="left:173px;top:425px;width:22px;height:17px"></div>
<svg class="a" style="left:174px;top:429px" width="20" height="7" viewBox="0 0 20 7"><path d="M0 2 H13 V0.5 L19 3.5 L13 6.5 V5 H0 Z" fill="#217d7b"/></svg>
<div class="cell" style="left:194px;top:425px;width:50px;height:17px"><div class="t" style="left:3px;top:2px"><span class="d">0<i>.</i>00</span><span class="m">MB</span></div></div>
<div class="cell" style="left:243px;top:425px;width:21px;height:17px"></div>
<svg class="a" style="left:244px;top:429px" width="20" height="7" viewBox="0 0 20 7"><path d="M19 2 H6 V0.5 L0 3.5 L6 6.5 V5 H19 Z" fill="#2fd62f"/></svg>
<div class="cell" style="left:263px;top:425px;width:61px;height:17px"><div class="t" style="left:3px;top:2px"><span class="d">0<i>.</i>00</span><span class="m">MB</span></div></div>
<div class="cell" style="left:5px;top:443px;width:31px;height:17px"></div>
<svg class="a" style="left:11px;top:447px" width="20" height="7" viewBox="0 0 20 7"><path d="M0 2 H13 V0.5 L19 3.5 L13 6.5 V5 H0 Z" fill="#217d7b"/></svg>
<div class="cell" style="left:35px;top:443px;width:51px;height:17px"><div class="t" style="left:3px;top:2px"><span class="d">0</span><span class="m">kb/s</span></div></div>
<div class="cell" style="left:90px;top:443px;width:31px;height:17px"><div class="t" style="left:3px;top:2px">包数</div></div>
<div class="cell" style="left:121px;top:443px;width:51px;height:17px"><div class="t" style="left:3px;top:2px"><span class="d">0</span></div></div>
<div class="cell" style="left:173px;top:443px;width:22px;height:17px"></div>
<svg class="a" style="left:174px;top:447px" width="20" height="7" viewBox="0 0 20 7"><path d="M0 2 H13 V0.5 L19 3.5 L13 6.5 V5 H0 Z" fill="#217d7b"/></svg>
<div class="cell" style="left:194px;top:443px;width:50px;height:17px"><div class="t" style="left:3px;top:2px"><span class="d">0</span></div></div>
<div class="cell" style="left:243px;top:443px;width:21px;height:17px"></div>
<svg class="a" style="left:244px;top:447px" width="20" height="7" viewBox="0 0 20 7"><path d="M19 2 H6 V0.5 L0 3.5 L6 6.5 V5 H19 Z" fill="#2fd62f"/></svg>
<div class="cell" style="left:263px;top:443px;width:61px;height:17px"><div class="t" style="left:3px;top:2px"><span class="d">0</span></div></div>
<div class="cell" style="left:5px;top:461px;width:31px;height:17px"></div>
<svg class="a" style="left:11px;top:465px" width="20" height="7" viewBox="0 0 20 7"><path d="M19 2 H6 V0.5 L0 3.5 L6 6.5 V5 H19 Z" fill="#2fd62f"/></svg>
<div class="cell" style="left:35px;top:461px;width:51px;height:17px"><div class="t" style="left:3px;top:2px"><span class="d">0</span><span class="m">kb/s</span></div></div>
<div class="cell" style="left:90px;top:461px;width:61px;height:17px"><div class="t" style="left:4px;top:2px">上网时间</div></div>
<div class="cell" style="left:150px;top:461px;width:81px;height:17px"><div class="t" style="left:3px;top:2px"><span class="d">0</span>小时<span class="d">0</span>分钟</div></div>
<div class="cell" style="left:232px;top:461px;width:61px;height:17px"><div class="t" style="left:4px;top:2px">日志条数</div></div>
<div class="cell" style="left:292px;top:461px;width:32px;height:17px"><div class="t" style="left:3px;top:2px"><span class="d">0</span></div></div>
<div class="cell" style="left:5px;top:495px;width:31px;height:17px"><div class="t" style="left:3px;top:2px">流速</div></div>
<div class="cell" style="left:35px;top:495px;width:51px;height:17px"><div class="t" style="left:3px;top:2px"><span class="d">0</span><span class="m">kb/s</span></div></div>
<div class="cell" style="left:90px;top:495px;width:31px;height:17px"><div class="t" style="left:3px;top:2px">字节</div></div>
<div class="cell" style="left:121px;top:495px;width:51px;height:17px"><div class="t" style="left:3px;top:2px"><span class="d">0<i>.</i>01</span><span class="m">MB</span></div></div>
<div class="cell" style="left:173px;top:495px;width:22px;height:17px"></div>
<svg class="a" style="left:174px;top:499px" width="20" height="7" viewBox="0 0 20 7"><path d="M0 2 H13 V0.5 L19 3.5 L13 6.5 V5 H0 Z" fill="#217d7b"/></svg>
<div class="cell" style="left:194px;top:495px;width:50px;height:17px"><div class="t" style="left:3px;top:2px"><span class="d">0<i>.</i>00</span><span class="m">MB</span></div></div>
<div class="cell" style="left:243px;top:495px;width:21px;height:17px"></div>
<svg class="a" style="left:244px;top:499px" width="20" height="7" viewBox="0 0 20 7"><path d="M19 2 H6 V0.5 L0 3.5 L6 6.5 V5 H19 Z" fill="#2fd62f"/></svg>
<div class="cell" style="left:263px;top:495px;width:61px;height:17px"><div class="t" style="left:3px;top:2px"><span class="d">0<i>.</i>01</span><span class="m">MB</span></div></div>
<div class="cell" style="left:5px;top:513px;width:31px;height:17px"></div>
<svg class="a" style="left:11px;top:517px" width="20" height="7" viewBox="0 0 20 7"><path d="M0 2 H13 V0.5 L19 3.5 L13 6.5 V5 H0 Z" fill="#217d7b"/></svg>
<div class="cell" style="left:35px;top:513px;width:51px;height:17px"><div class="t" style="left:3px;top:2px"><span class="d">0</span><span class="m">kb/s</span></div></div>
<div class="cell" style="left:90px;top:513px;width:31px;height:17px"><div class="t" style="left:3px;top:2px">包数</div></div>
<div class="cell" style="left:121px;top:513px;width:51px;height:17px"><div class="t" style="left:3px;top:2px"><span class="d">0</span></div></div>
<div class="cell" style="left:173px;top:513px;width:22px;height:17px"></div>
<svg class="a" style="left:174px;top:517px" width="20" height="7" viewBox="0 0 20 7"><path d="M0 2 H13 V0.5 L19 3.5 L13 6.5 V5 H0 Z" fill="#217d7b"/></svg>
<div class="cell" style="left:194px;top:513px;width:50px;height:17px"><div class="t" style="left:3px;top:2px"><span class="d">0</span></div></div>
<div class="cell" style="left:243px;top:513px;width:21px;height:17px"></div>
<svg class="a" style="left:244px;top:517px" width="20" height="7" viewBox="0 0 20 7"><path d="M19 2 H6 V0.5 L0 3.5 L6 6.5 V5 H19 Z" fill="#2fd62f"/></svg>
<div class="cell" style="left:263px;top:513px;width:61px;height:17px"><div class="t" style="left:3px;top:2px"><span class="d">0</span></div></div>
<div class="cell" style="left:5px;top:531px;width:31px;height:17px"></div>
<svg class="a" style="left:11px;top:535px" width="20" height="7" viewBox="0 0 20 7"><path d="M19 2 H6 V0.5 L0 3.5 L6 6.5 V5 H19 Z" fill="#2fd62f"/></svg>
<div class="cell" style="left:35px;top:531px;width:51px;height:17px"><div class="t" style="left:3px;top:2px"><span class="d">0</span><span class="m">kb/s</span></div></div>
<div class="cell" style="left:90px;top:531px;width:61px;height:17px"><div class="t" style="left:4px;top:2px">上网时间</div></div>
<div class="cell" style="left:150px;top:531px;width:81px;height:17px"><div class="t" style="left:3px;top:2px"><span class="d">0</span>小时<span class="d">0</span>分钟</div></div>
<div class="cell" style="left:232px;top:531px;width:61px;height:17px"><div class="t" style="left:4px;top:2px">日志条数</div></div>
<div class="cell" style="left:292px;top:531px;width:32px;height:17px"><div class="t" style="left:3px;top:2px"><span class="d">0</span></div></div>
<div class="a" style="left:330px;top:0;width:327px;height:511px;background:#c6c6c6"></div>
<div class="a" style="left:330px;top:0px;width:327px;height:54px;border-left:1px solid #000;border-right:2px solid #000;padding:1px 0 2px 0;background-color:#000;background-image:linear-gradient(180deg,transparent 12px,#464646 12px),linear-gradient(90deg,transparent 12px,#464646 12px);background-size:13px 13px;background-origin:content-box,padding-box;background-clip:content-box,padding-box;"></div>
<div class="a" style="left:330px;top:70px;width:327px;height:54px;border-left:1px solid #000;border-right:2px solid #000;padding:1px 0 2px 0;background-color:#000;background-image:linear-gradient(180deg,transparent 12px,#464646 12px),linear-gradient(90deg,transparent 12px,#464646 12px);background-size:13px 13px;background-origin:content-box,padding-box;background-clip:content-box,padding-box;"></div>
<div class="a" style="left:330px;top:140px;width:327px;height:54px;border-left:1px solid #000;border-right:2px solid #000;padding:1px 0 2px 0;background-color:#000;background-image:linear-gradient(180deg,transparent 12px,#464646 12px),linear-gradient(90deg,transparent 12px,#464646 12px);background-size:13px 13px;background-origin:content-box,padding-box;background-clip:content-box,padding-box;"></div>
<div class="a" style="left:330px;top:210px;width:327px;height:54px;border-left:1px solid #000;border-right:2px solid #000;padding:1px 0 2px 0;background-color:#000;background-image:linear-gradient(180deg,transparent 12px,#464646 12px),linear-gradient(90deg,transparent 12px,#464646 12px);background-size:13px 13px;background-origin:content-box,padding-box;background-clip:content-box,padding-box;"></div>
<div class="a" style="left:330px;top:280px;width:327px;height:54px;border-left:1px solid #000;border-right:2px solid #000;padding:1px 0 2px 0;background-color:#000;background-image:linear-gradient(180deg,transparent 12px,#464646 12px),linear-gradient(90deg,transparent 12px,#464646 12px);background-size:13px 13px;background-origin:content-box,padding-box;background-clip:content-box,padding-box;"></div>
<div class="a" style="left:330px;top:350px;width:327px;height:54px;border-left:1px solid #000;border-right:2px solid #000;padding:1px 0 2px 0;background-color:#000;background-image:linear-gradient(180deg,transparent 12px,#464646 12px),linear-gradient(90deg,transparent 12px,#464646 12px);background-size:13px 13px;background-origin:content-box,padding-box;background-clip:content-box,padding-box;"></div>
<div class="a" style="left:330px;top:420px;width:327px;height:54px;border-left:1px solid #000;border-right:2px solid #000;padding:1px 0 2px 0;background-color:#000;background-image:linear-gradient(180deg,transparent 12px,#464646 12px),linear-gradient(90deg,transparent 12px,#464646 12px);background-size:13px 13px;background-origin:content-box,padding-box;background-clip:content-box,padding-box;"></div>
<div class="a" style="left:330px;top:490px;width:327px;height:54px;border-left:1px solid #000;border-right:2px solid #000;padding:1px 0 2px 0;background-color:#000;background-image:linear-gradient(180deg,transparent 12px,#464646 12px),linear-gradient(90deg,transparent 12px,#464646 12px);background-size:13px 13px;background-origin:content-box,padding-box;background-clip:content-box,padding-box;"></div>
<div class="a" style="left:330px;top:54px;width:83px;height:13px;border-radius:6.5px;background:#02fb7d"></div>
<div class="a" style="left:327px;top:125.5px;width:78px;height:12.0px;border-radius:6.0px;background:#02fb7d"></div>
<div class="a" style="left:329px;top:195px;width:157px;height:13px;border-radius:6.5px;background:#02fb7d"></div>
<div class="a" style="left:329px;top:266px;width:169px;height:12px;border-radius:6.0px;background:#02fb7d"></div>
<div class="a" style="left:328px;top:335.5px;width:222px;height:14.0px;border-radius:7.0px;background:#02fb7d"></div>
<div class="a" style="left:327px;top:404.5px;width:219px;height:15.0px;border-radius:7.5px;background:#02fb7d"></div>
<div class="a" style="left:326px;top:477px;width:90px;height:10.5px;border-radius:5.25px;background:#02fb7d"></div>
<div class="a" style="left:657px;top:0;width:15px;height:511px;background:linear-gradient(90deg,#fdfeff 0%,#eef3fb 50%,#c9d8f2 100%)"><div class="a" style="left:0;top:339px;width:15px;height:155px;background:#a3a3a3"></div><div class="a" style="left:0;top:0;width:15px;height:15px;background:linear-gradient(90deg,#eaf1fc,#c4d6f4);border-bottom:1px solid #9db0d6"></div><div class="a" style="left:1px;top:4px;border:6px solid transparent;border-bottom:6px solid #1212d8;border-top:0"></div><div class="a" style="left:0;top:494px;width:15px;height:17px;background:linear-gradient(90deg,#f6f9fe,#d1def5)"></div><div class="a" style="left:2px;top:497px;border:6px solid transparent;border-top:6.5px solid #1212d8;border-bottom:0"></div></div>
</div>
<div class="a" style="left:1px;top:667px;width:1021px;height:1px;background:#000"></div>
<div class="a" style="left:1px;top:668px;width:102px;height:78px;background:#dbe7f4"></div>
<div class="a" style="left:10px;top:672px;width:70px;height:15px;border-radius:8px 0 0 8px;background:linear-gradient(180deg,#6c6c70 0%,#86868a 28%,#bdbdc1 58%,#e6e6ea 85%,#e4ebf5 100%);"></div>
<div class="a" style="left:11px;top:675px;width:8px;height:10px;border-radius:4px;background:radial-gradient(circle at 50% 45%,#ffe9a0 0%,#e3a544 30%,#b9782a 65%,#8a5618 100%);box-shadow:0 0 0 1px rgba(255,255,255,.55)"></div>
<div class="t" style="left:21px;top:673px">系统信息</div>
<div class="a" style="left:10px;top:692px;width:70px;height:15px;border-radius:8px 0 0 8px;background:linear-gradient(180deg,#9fbcc4 0%,#cfdde1 35%,#f6f9fa 65%,#ffffff 100%);"></div>
<div class="a" style="left:11px;top:695px;width:8px;height:10px;border-radius:4px;background:radial-gradient(circle at 50% 45%,#ffe9a0 0%,#e3a544 30%,#b9782a 65%,#8a5618 100%);box-shadow:0 0 0 1px rgba(255,255,255,.55)"></div>
<div class="t" style="left:21px;top:693px">管理连接</div>
<div class="a" style="left:10px;top:712px;width:70px;height:15px;border-radius:8px 0 0 8px;background:linear-gradient(180deg,#ffffff 0%,#ffffff 55%,#e3e6e9 85%,#d6dadd 100%);border-top:1px solid #222;"></div>
<div class="a" style="left:11px;top:715px;width:8px;height:10px;border-radius:4px;background:radial-gradient(circle at 50% 45%,#c8ffe0 0%,#3ccf88 35%,#1fa565 100%);box-shadow:0 0 0 1px rgba(255,255,255,.55)"></div>
<div class="t" style="left:21px;top:713px">报警信息</div>
<div class="a" style="left:103px;top:668px;width:698px;height:78px;background:#fff;border-left:1px solid #000;border-top:1px solid #000;border-right:1px solid #000"></div>
<div class="a" style="left:104px;top:669px;width:61px;height:16px;background:#e6e6e6;border-top:1px solid #fafafa;border-left:1px solid #fafafa;border-right:2px solid #a2a2a2;border-bottom:2px solid #9a9a9a"><div class="t" style="left:6px;top:1px"><span class='m'>MAC</span>地址</div></div>
<div class="a" style="left:165px;top:669px;width:80px;height:16px;background:#e6e6e6;border-top:1px solid #fafafa;border-left:1px solid #fafafa;border-right:2px solid #a2a2a2;border-bottom:2px solid #9a9a9a"><div class="t" style="left:5px;top:1px">报警类型</div></div>
<div class="a" style="left:245px;top:669px;width:80px;height:16px;background:#e6e6e6;border-top:1px solid #fafafa;border-left:1px solid #fafafa;border-right:2px solid #a2a2a2;border-bottom:2px solid #9a9a9a"><div class="t" style="left:5px;top:1px"><span class='m'>IP</span>地址</div></div>
<div class="a" style="left:325px;top:669px;width:80px;height:16px;background:#e6e6e6;border-top:1px solid #fafafa;border-left:1px solid #fafafa;border-right:2px solid #a2a2a2;border-bottom:2px solid #9a9a9a"><div class="t" style="left:5px;top:1px">机器名</div></div>
<div class="a" style="left:405px;top:669px;width:60px;height:16px;background:#e6e6e6;border-top:1px solid #fafafa;border-left:1px solid #fafafa;border-right:2px solid #a2a2a2;border-bottom:2px solid #9a9a9a"><div class="t" style="left:5px;top:1px">用户名</div></div>
<div class="a" style="left:465px;top:669px;width:80px;height:16px;background:#e6e6e6;border-top:1px solid #fafafa;border-left:1px solid #fafafa;border-right:2px solid #a2a2a2;border-bottom:2px solid #9a9a9a"><div class="t" style="left:5px;top:1px">时间</div></div>
<div class="a" style="left:545px;top:669px;width:20px;height:16px;background:#e6e6e6;border-top:1px solid #fafafa;border-left:1px solid #fafafa;border-right:2px solid #a2a2a2;border-bottom:2px solid #9a9a9a"></div>
<div class="a" style="left:565px;top:669px;width:200px;height:16px;background:#e6e6e6;border-top:1px solid #fafafa;border-left:1px solid #fafafa;border-right:2px solid #a2a2a2;border-bottom:2px solid #9a9a9a"><div class="t" style="left:6px;top:1px">描述</div></div>
<div class="btn" style="left:689px;top:711px;width:94px;height:17px"><span class="bt">清空报警信息</span></div>
<div class="a" style="left:801px;top:668px;width:221px;height:78px;background:#dbe7f4"></div>
<div class="t" style="left:803px;top:677px">系统背景颜色</div>
<div class="t" style="left:803px;top:703px">系统界面语言</div>
<div class="combo" style="left:881px;top:672px;width:136px"><div class="cbtn"></div><div class="t" style="left:1px;top:2px">浅蓝色</div></div>
<div class="combo" style="left:881px;top:698px;width:136px"><div class="cbtn"></div><div class="t" style="left:1px;top:2px"><span class="m">Chinese (R</span><span class="d"><i>.</i></span><span class="m">P</span><span class="d"><i>.</i></span><span class="m">C)</span></div></div>
<div class="btn" style="left:941px;top:723px;width:53px;height:18px;line-height:16px"><span class="bt">退出系统</span></div>
<div class="a" id="topline"></div><div class="a" id="leftline"></div><div class="a" style="left:1px;top:667px;width:1px;height:81px;background:#111"></div><div class="a" id="botline"></div><div class="a" id="rightedge"></div>
</div>
</body>
</html>
